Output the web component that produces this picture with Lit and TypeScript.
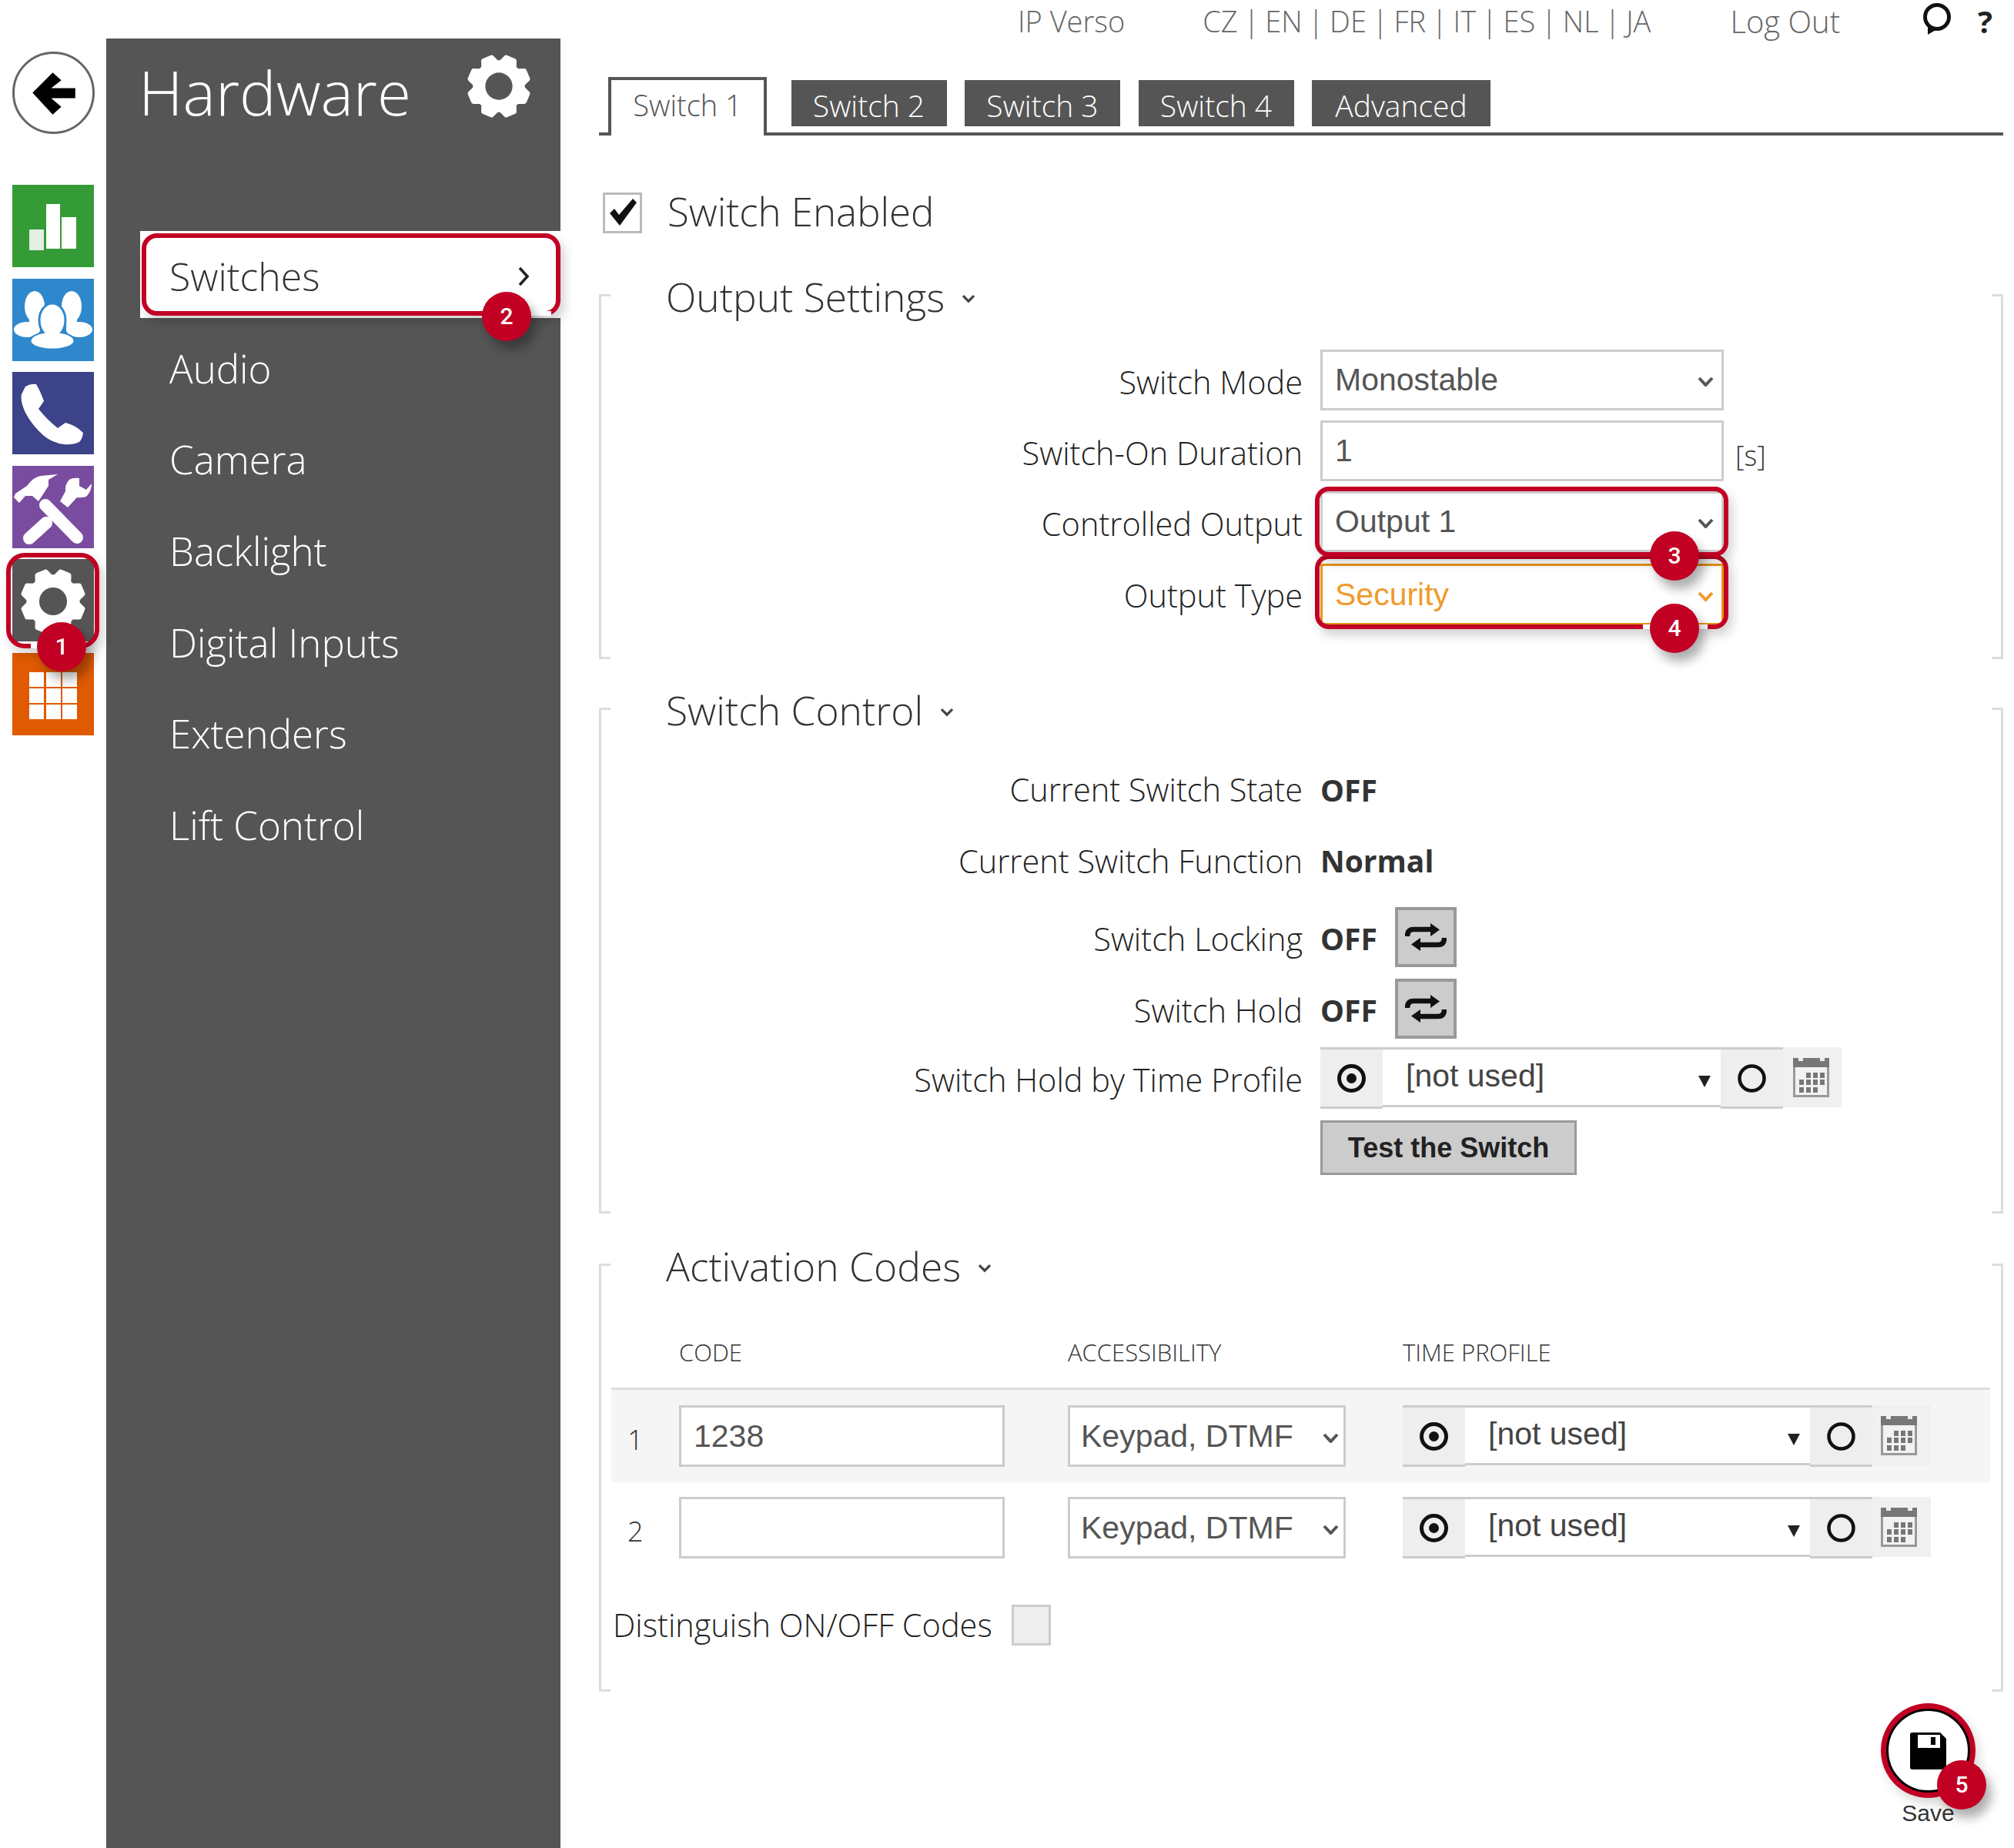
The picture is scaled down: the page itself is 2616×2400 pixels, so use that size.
import { LitElement, html, css, svg, unsafeCSS } from 'lit';
import { customElement } from 'lit/decorators.js';

const RED = unsafeCSS('#c10024');

// 8-tooth cog, drawn around 0,0 with outer radius 50
const gearPath = () => {
  const pts: string[] = [];
  for (let i = 0; i < 8; i++) {
    const a = (i * Math.PI) / 4 + Math.PI / 8 - Math.PI / 2;
    const at = (r: number, d: number) =>
      `${(r * Math.cos(a + d)).toFixed(1)} ${(r * Math.sin(a + d)).toFixed(1)}`;
    pts.push(at(37, -0.3), at(46, -0.15), at(46, 0.15), at(37, 0.3));
  }
  return `M${pts.join('L')}Z`;
};

const gear = (cls: string) => html`<svg class=${cls} viewBox="-50 -50 100 100">
  <path d=${gearPath()} fill="#fff" stroke="#fff" stroke-width="7" stroke-linejoin="round"></path>
  <circle r="21" fill="#555"></circle>
</svg>`;

const chevron = () => html`<svg class="chev" viewBox="0 0 21 13">
  <polyline points="2,2 10.5,11 19,2" fill="none" stroke="currentColor" stroke-width="4"></polyline>
</svg>`;

const titleChev = () => html`<svg class="tchev" viewBox="0 0 14 9">
  <polyline points="1.5,1.5 7,7 12.5,1.5" fill="none" stroke="#444" stroke-width="2.4"></polyline>
</svg>`;

const swap = () => html`<svg class="swap" viewBox="0 0 54 36">
  <path d="M3 17Q3 8 11 8H36M51 19Q51 28 43 28H18" fill="none" stroke="#111" stroke-width="6.5"></path>
  <polygon points="33,0 45,8.500 33,17" fill="#111"></polygon>
  <polygon points="20,19 8,27.500 20,36" fill="#111"></polygon>
</svg>`;

const radioOn = () => html`<svg class="radio" viewBox="0 0 37 37">
  <circle cx="18.500" cy="18.500" r="16" fill="none" stroke="#111" stroke-width="5"></circle>
  <circle cx="18.500" cy="18.500" r="6.500" fill="#111"></circle>
</svg>`;

const radioOff = () => html`<svg class="radio" viewBox="0 0 37 37">
  <circle cx="18.500" cy="18.500" r="16" fill="none" stroke="#111" stroke-width="4.500"></circle>
</svg>`;

const calCols = [8, 17, 26, 35];
const calDots = [
  { y: 19, cols: [1, 2, 3] },
  { y: 28, cols: [0, 1, 2, 3] },
  { y: 38, cols: [0, 1, 2] },
];

const calendar = () => html`<svg class="cal" viewBox="0 0 47 51">
  <rect x="0" y="0" width="47" height="51" fill="#999"></rect>
  <rect x="3" y="12" width="41" height="36" fill="#f2f2f2"></rect>
  <rect x="0" y="0" width="47" height="12" fill="#777"></rect>
  <rect x="7" y="0" width="6" height="4" fill="#eee"></rect>
  <rect x="35" y="0" width="6" height="4" fill="#eee"></rect>
  ${calDots.map((row) =>
    row.cols.map((c) => svg`<rect x=${calCols[c]} y=${row.y} width="6" height="7" fill="#777"></rect>`)
  )}
</svg>`;

const badge = (n: number, cls: string) => html`<span class="badge ${cls}">${n}</span>`;

const field = (text: string, cls = '', arrow = true) => html`<div class="field ${cls}">
  <span>${text}</span>${arrow ? chevron() : ''}
</div>`;

const timeGroup = (cls = '') => html`<div class="time ${cls}">
  <div class="tblock">${radioOn()}</div>
  <div class="tselect"><span>[not used]</span><i class="tri"></i></div>
  <div class="tblock">${radioOff()}</div>
  <div class="tcal">${calendar()}</div>
</div>`;

const icons = [
  {
    color: '#359b37',
    icon: svg`<rect x="22" y="58" width="19" height="27" fill="#fff" opacity=".85"></rect>
      <rect x="44" y="25" width="18" height="58" fill="#fff"></rect>
      <rect x="64" y="42" width="19" height="41" fill="#fff"></rect>`,
  },
  {
    color: '#2f88cc',
    icon: svg`<g fill="#fff">
        <ellipse cx="29" cy="36" rx="13" ry="20"></ellipse>
        <ellipse cx="19" cy="66" rx="17" ry="10"></ellipse>
        <path d="M22 50H36V68H22Z"></path>
        <ellipse cx="77" cy="36" rx="13" ry="20"></ellipse>
        <ellipse cx="87" cy="66" rx="17" ry="10"></ellipse>
        <path d="M70 50H84V68H70Z"></path>
      </g>
      <g fill="#fff" stroke="#2f88cc" stroke-width="3">
        <ellipse cx="52" cy="81" rx="29" ry="11"></ellipse>
        <ellipse cx="52" cy="54" rx="17" ry="22"></ellipse>
      </g>
      <ellipse cx="52" cy="80" rx="27" ry="10" fill="#fff"></ellipse>
      <path d="M44 68H60V76H44Z" fill="#fff"></path>`,
  },
  {
    color: '#3d4389',
    icon: svg`<path fill="#fff" d="M17 19Q24 15 31 16Q37 26 41 38L34 48Q45 62 59 73L69 66Q82 69 92 79Q91 87 87 91Q78 95 67 94Q52 92 41 83Q26 70 17 53Q10 38 12 29Z"></path>`,
  },
  {
    color: '#7a4c9f',
    icon: svg`<g fill="#fff">
        <path d="M59 11L47 18V26L34 46L26 39H17L9 48L2 41L4 36L19 26Q28 14 37 13Z"></path>
        <path d="M62 46L72 54L84 41Q93 42 97 39Q103 32 103 23L96 31L87 26L87 16Q78 15 74 18Q68 24 69 33Z"></path>
      </g>
      <g stroke="#fff" stroke-width="16" stroke-linecap="round">
        <line x1="43" y1="51" x2="84" y2="93"></line>
        <line x1="44" y1="74" x2="22" y2="94"></line>
      </g>`,
  },
  { color: '#555', icon: null },
  {
    color: '#df5a00',
    icon: svg`${[25, 46, 67].map((y) =>
      [22, 44, 65].map((x) => svg`<rect x=${x} y=${y} width="19" height="19" fill="#fff"></rect>`)
    )}`,
  },
];

const menu = ['Switches', 'Audio', 'Camera', 'Backlight', 'Digital Inputs', 'Extenders', 'Lift Control'];
const tabs = ['Switch 1', 'Switch 2', 'Switch 3', 'Switch 4', 'Advanced'];

@customElement('app-root')
export class AppRoot extends LitElement {
  static styles = css`
    :host {
      display: block;
      width: 2616px;
      height: 2400px;
      background: #fff;
      overflow: hidden;
      font-family: 'Open Sans', sans-serif;
      color: #333;
    }

    .page {
      display: flex;
      height: 2400px;
      position: relative;
    }

    /* Icon rail */
    .rail {
      width: 138px;
      flex: none;
      box-sizing: border-box;
      padding: 67px 0 0 16px;
    }
    .back {
      width: 107px;
      height: 107px;
      box-sizing: border-box;
      border: 3px solid #666;
      border-radius: 50%;
    }
    .back svg {
      display: block;
      width: 101px;
      height: 101px;
    }
    .tiles {
      display: grid;
      grid-auto-rows: 107px;
      row-gap: 14.6px;
      margin-top: 66px;
      width: 106px;
    }
    .tile {
      position: relative;
    }
    .tile > svg {
      display: block;
      width: 106px;
      height: 107px;
    }
    .tile.on {
      z-index: 2;
    }
    .tile .tilegear {
      position: absolute;
      left: 10px;
      top: 12px;
      width: 86px;
      height: 86px;
    }

    /* Red callouts */
    .mark {
      position: absolute;
      box-sizing: border-box;
      border: 6px solid ${RED};
      border-radius: 20px;
      box-shadow: 5px 8px 14px rgba(0, 0, 0, 0.18);
      pointer-events: none;
    }
    .mark i {
      position: absolute;
      bottom: -6px;
      height: 6px;
      background: #fff;
    }
    .mark-tile {
      inset: -8px -7px -9px -8px;
      border-radius: 24px;
    }
    .mark-tile i {
      left: 26px;
      width: 20px;
    }
    .mark-menu {
      inset: 3px 0 3px 2px;
    }
    .mark-menu i {
      left: 438px;
      width: 88px;
    }
    .mark-out {
      inset: -6px -6px -6px -7px;
      border-radius: 18px;
    }
    .mark-type {
      inset: -12px -6px -5px -7px;
      border-radius: 18px;
    }
    .mark-type i {
      left: 420px;
      width: 84px;
    }

    .badge {
      position: absolute;
      z-index: 5;
      width: 64px;
      height: 64px;
      border-radius: 50%;
      background: ${RED};
      color: #fff;
      font: 500 30px/64px Roboto, sans-serif;
      text-align: center;
      box-shadow: 7px 11px 14px rgba(0, 0, 0, 0.32);
    }
    .b1 {
      left: 32px;
      top: 82px;
    }
    .b2 {
      left: 444px;
      top: 79px;
    }
    .b3,
    .b4 {
      left: 428px;
      top: 52px;
    }
    .b5 {
      left: 63px;
      top: 64px;
    }

    /* Dark menu */
    .side {
      width: 590px;
      flex: none;
      margin-top: 50px;
      background: #555;
      color: #fff;
    }
    .head {
      display: flex;
      justify-content: space-between;
      height: 140px;
      padding: 0 38px 0 42px;
    }
    .head h1 {
      margin: 0;
      font-size: 80px;
      font-weight: 300;
      line-height: 138px;
    }
    .headgear {
      width: 84px;
      height: 84px;
      margin-top: 20px;
    }
    .menu {
      display: grid;
      grid-auto-rows: 113px;
      row-gap: 5.7px;
      margin: 110px 0 0 44px;
    }
    .item {
      position: relative;
      display: flex;
      align-items: center;
      justify-content: space-between;
      padding: 5px 41px 0 38px;
      font-size: 51px;
      font-weight: 300;
    }
    .item.on {
      background: #fff;
      color: #333;
      font-size: 50px;
    }
    .item svg {
      width: 14px;
      height: 28px;
    }

    /* Main column */
    .main {
      width: 1888px;
      min-width: 0;
      flex: none;
      box-sizing: border-box;
      padding: 0 14px 0 50px;
    }
    .top {
      display: flex;
      align-items: center;
      height: 54px;
      font-size: 38px;
      font-weight: 300;
      color: #666;
      white-space: pre;
    }
    .top .verso {
      margin-left: 544px;
    }
    .top .langs {
      margin-left: 101px;
      word-spacing: -2.4px;
    }
    .top .logout {
      margin-left: 103px;
      font-size: 40px;
    }
    .top .talk {
      width: 40px;
      height: 46px;
      margin: -8px 0 0 106px;
    }
    .top .help {
      margin-left: 33px;
      font-size: 40px;
      font-weight: 700;
      color: #222;
    }

    .tabs {
      display: flex;
      align-items: flex-start;
      gap: 23.5px;
      margin-top: 46px;
      height: 72px;
      padding-left: 12px;
      border-bottom: 4px solid #555;
      font-size: 39px;
    }
    .tab {
      width: 202px;
      height: 60px;
      margin-top: 4px;
      background: #555;
      color: #fff;
      text-align: center;
      line-height: 66px;
      font-weight: 300;
    }
    .tab.wide {
      width: 232px;
    }
    .tab.on {
      width: 206px;
      height: 76px;
      margin: 0 8px 0 0;
      box-sizing: border-box;
      background: #fff;
      color: #555;
      border: 4px solid #555;
      border-bottom: 0;
      line-height: 64px;
      font-size: 38px;
    }

    .enable {
      display: flex;
      align-items: center;
      gap: 33px;
      height: 53px;
      margin: 74px 0 0 5px;
      font-size: 51px;
      font-weight: 300;
    }
    .enable span {
      margin-bottom: 6px;
    }
    .box {
      display: block;
      width: 51px;
      height: 53px;
      box-sizing: border-box;
      border: 3px solid #bbb;
      flex: none;
    }
    .box.off {
      background: #eee;
      border-color: #ccc;
    }

    /* Bracketed sections */
    .group {
      display: flex;
      flex-direction: column;
      border-left: 3px solid #ddd;
      border-right: 3px solid #ddd;
      background-image: linear-gradient(#ddd, #ddd), linear-gradient(#ddd, #ddd), linear-gradient(#ddd, #ddd),
        linear-gradient(#ddd, #ddd);
      background-size: 12px 3px;
      background-repeat: no-repeat;
      background-position: 0 0, 100% 0, 0 100%, 100% 100%;
    }
    .g1 {
      margin-top: 79px;
      padding-bottom: 44px;
    }
    .g2 {
      margin-top: 63px;
      padding-bottom: 41px;
    }
    .g3 {
      margin-top: 65px;
      padding-bottom: 59px;
    }
    .title {
      display: flex;
      align-items: center;
      gap: 22px;
      height: 60px;
      margin: -27px 0 0 84px;
      font-size: 51.5px;
      font-weight: 300;
    }
    .tchev {
      width: 18px;
      height: 12px;
      margin-top: 6px;
    }

    .form {
      display: grid;
      grid-template-columns: 911px 1fr;
      column-gap: 23px;
      align-items: center;
      font-size: 41.5px;
    }
    .f1 {
      row-gap: 13px;
      margin-top: 39px;
    }
    .f2 {
      grid-template-rows: 80px 105px 97px 89px 92px 89px;
      margin-top: 31px;
    }
    .label {
      text-align: right;
      padding-top: 4px;
      font-weight: 300;
      color: #222;
    }
    .ctl {
      display: flex;
      align-items: center;
      position: relative;
      justify-self: start;
    }
    .ctl.front {
      z-index: 3;
    }
    .ctl.low {
      margin-top: 2px;
    }
    .unit {
      margin: 12px 0 0 15px;
      font-size: 36px;
      font-weight: 300;
    }
    .val {
      font-weight: 700;
      font-size: 39px;
      padding-top: 4px;
    }
    .ctl .val {
      width: 97px;
    }

    .field {
      display: flex;
      align-items: center;
      justify-content: space-between;
      box-sizing: border-box;
      width: 524px;
      height: 79px;
      padding: 0 10px 0 16px;
      border: 3px solid #ccc;
      background: #fff;
      color: #555;
      font: 41px 'Liberation Sans', Arial, sans-serif;
    }
    .field.warn {
      border-color: #e8951a;
      color: #f09a2c;
      height: 80px;
    }
    .chev {
      width: 21px;
      height: 13px;
      margin-top: 4px;
    }
    .swapbtn {
      display: flex;
      align-items: center;
      justify-content: center;
      box-sizing: border-box;
      width: 80px;
      height: 78px;
      background: #ccc;
      border: 4px solid #999;
    }
    .swap {
      width: 54px;
      height: 36px;
    }

    .time {
      display: flex;
      width: 677px;
      height: 80px;
      font: 41px 'Liberation Sans', Arial, sans-serif;
      color: #444;
    }
    .time.rowtime {
      width: 686px;
    }
    .tblock {
      display: flex;
      align-items: center;
      justify-content: center;
      width: 81px;
      flex: none;
      box-sizing: border-box;
      background: #eee;
      border-top: 3px solid #ccc;
      border-bottom: 3px solid #ccc;
    }
    .radio {
      width: 37px;
      height: 37px;
    }
    .tselect {
      flex: 1;
      display: flex;
      align-items: center;
      justify-content: space-between;
      height: 78px;
      box-sizing: border-box;
      padding: 0 13px 3px 30px;
      background: #fff;
      border-top: 3px solid #ccc;
      border-bottom: 3px solid #ccc;
    }
    .tri {
      width: 0;
      height: 0;
      margin-top: 14px;
      border-left: 8px solid transparent;
      border-right: 8px solid transparent;
      border-top: 15px solid #222;
    }
    .tcal {
      display: flex;
      align-items: center;
      justify-content: center;
      width: 76px;
      height: 78px;
      flex: none;
      background: #f0f0f0;
    }
    .cal {
      width: 47px;
      height: 51px;
      margin-right: 4px;
    }
    .rowtime .cal {
      margin-right: 8px;
    }
    .test {
      display: flex;
      align-items: center;
      justify-content: center;
      box-sizing: border-box;
      width: 333px;
      height: 71px;
      background: #ccc;
      border: 3px solid #999;
      font: 700 36px 'Liberation Sans', Arial, sans-serif;
      color: #222;
    }

    /* Codes table */
    .table {
      margin: 52px 14px 0 13px;
    }
    .tr {
      display: grid;
      grid-template-columns: 88px 505px 435px 1fr;
      align-items: center;
    }
    .thead {
      height: 60px;
      padding-bottom: 16px;
      border-bottom: 3px solid #ddd;
      font-size: 31px;
      font-weight: 300;
      color: #333;
    }
    .row {
      height: 118px;
    }
    .row.shade {
      height: 120px;
      background: #f5f5f5;
    }
    .num {
      padding: 8px 0 0 21px;
      font-size: 36px;
      font-weight: 300;
    }
    .code {
      width: 423px;
      height: 80px;
    }
    .acc {
      width: 361px;
      height: 80px;
      padding: 0 6px 0 14px;
    }
    .distinct {
      display: flex;
      align-items: center;
      gap: 25px;
      margin: 39px 0 0 15px;
      font-size: 41.5px;
      font-weight: 300;
      color: #222;
    }

    /* Floating save button */
    .save {
      position: absolute;
      right: 57px;
      top: 2219px;
      width: 109px;
      font: 30px/40px 'Liberation Sans', Arial, sans-serif;
      color: #333;
      text-align: center;
    }
    .ring {
      position: relative;
      display: flex;
      align-items: center;
      justify-content: center;
      width: 109px;
      height: 109px;
      box-sizing: border-box;
      border: 3px solid #000;
      border-radius: 50%;
      box-shadow: 0 0 0 7px ${RED}, 5px 8px 14px 7px rgba(0, 0, 0, 0.15);
      background: #fff;
    }
    .ring svg {
      width: 47px;
      height: 48px;
    }
    .savelabel {
      display: block;
      margin-top: 7px;
    }
  `;

  render() {
    return html`
      <div class="page">
        <nav class="rail">
          <div class="back">
            <svg viewBox="0 0 100 100"><path d="M23 50L49 24L60 34L47 44H78V57H47L60 68L49 78Z" fill="#000"></path></svg>
          </div>
          <div class="tiles">
            ${icons.map((t) =>
              t.icon
                ? html`<div class="tile"><svg viewBox="0 0 106 107" style="background:${t.color}">${t.icon}</svg></div>`
                : html`<div class="tile on" style="background:${t.color}">
                    ${gear('tilegear')}
                    <div class="mark mark-tile"><i></i></div>
                    ${badge(1, 'b1')}
                  </div>`
            )}
          </div>
        </nav>

        <aside class="side">
          <div class="head">
            <h1>Hardware</h1>
            ${gear('headgear')}
          </div>
          <div class="menu">
            ${menu.map((m, i) =>
              i === 0
                ? html`<div class="item on">
                    <span>${m}</span>
                    <svg viewBox="0 0 14 28"><polyline points="2,3 12,14 2,25" fill="none" stroke="#222" stroke-width="3.500"></polyline></svg>
                    <div class="mark mark-menu"><i></i></div>
                    ${badge(2, 'b2')}
                  </div>`
                : html`<div class="item"><span>${m}</span></div>`
            )}
          </div>
        </aside>

        <main class="main">
          <div class="top">
            <span class="verso">IP Verso</span>
            <span class="langs">CZ | EN | DE | FR | IT | ES | NL | JA</span>
            <span class="logout">Log Out</span>
            <svg class="talk" viewBox="0 0 40 46">
              <circle cx="20" cy="22" r="15.500" fill="none" stroke="#111" stroke-width="5"></circle>
              <path d="M8 32L8 45L20 38" fill="#111"></path>
            </svg>
            <span class="help">?</span>
          </div>

          <div class="tabs">
            ${tabs.map(
              (t, i) => html`<div class="tab ${i === 0 ? 'on' : ''} ${t === 'Advanced' ? 'wide' : ''}">${t}</div>`
            )}
          </div>

          <div class="enable">
            <svg class="box" viewBox="0 0 45 47">
              <polygon points="6,24 12,18 18,26 36,5 41,10 19,40" fill="#111"></polygon>
            </svg>
            <span>Switch Enabled</span>
          </div>

          <section class="group g1">
            <div class="title">Output Settings ${titleChev()}</div>
            <div class="form f1">
              <div class="label">Switch Mode</div>
              <div class="ctl">${field('Monostable')}</div>
              <div class="label">Switch-On Duration</div>
              <div class="ctl">${field('1', '', false)}<span class="unit">[s]</span></div>
              <div class="label">Controlled Output</div>
              <div class="ctl front">
                ${field('Output 1')}
                <div class="mark mark-out"></div>
                ${badge(3, 'b3')}
              </div>
              <div class="label">Output Type</div>
              <div class="ctl low">
                ${field('Security', 'warn')}
                <div class="mark mark-type"><i></i></div>
                ${badge(4, 'b4')}
              </div>
            </div>
          </section>

          <section class="group g2">
            <div class="title">Switch Control ${titleChev()}</div>
            <div class="form f2">
              <div class="label">Current Switch State</div>
              <div class="val">OFF</div>
              <div class="label">Current Switch Function</div>
              <div class="val">Normal</div>
              <div class="label">Switch Locking</div>
              <div class="ctl"><span class="val">OFF</span><div class="swapbtn">${swap()}</div></div>
              <div class="label">Switch Hold</div>
              <div class="ctl"><span class="val">OFF</span><div class="swapbtn">${swap()}</div></div>
              <div class="label">Switch Hold by Time Profile</div>
              ${timeGroup()}
              <div></div>
              <div class="test">Test the Switch</div>
            </div>
          </section>

          <section class="group g3">
            <div class="title">Activation Codes ${titleChev()}</div>
            <div class="table">
              <div class="tr thead">
                <span></span><span>CODE</span><span>ACCESSIBILITY</span><span>TIME PROFILE</span>
              </div>
              ${['1238', ''].map(
                (code, i) => html`<div class="tr row ${i === 0 ? 'shade' : ''}">
                  <span class="num">${i + 1}</span>
                  ${field(code, 'code', false)} ${field('Keypad, DTMF', 'acc')} ${timeGroup('rowtime')}
                </div>`
              )}
            </div>
            <div class="distinct">
              <span>Distinguish ON/OFF Codes</span>
              <span class="box off"></span>
            </div>
          </section>

          <div class="save">
            <div class="ring">
              <svg viewBox="0 0 47 48">
                <path d="M3 0H39L47 8V45Q47 48 44 48H3Q0 48 0 45V3Q0 0 3 0Z" fill="#000"></path>
                <rect x="10" y="3" width="29" height="17" fill="#fff"></rect>
                <rect x="27" y="6" width="6" height="10" fill="#000"></rect>
              </svg>
              ${badge(5, 'b5')}
            </div>
            <span class="savelabel">Save</span>
          </div>
        </main>
      </div>
    `;
  }
}

declare global {
  interface HTMLElementTagNameMap {
    'app-root': AppRoot;
  }
}
